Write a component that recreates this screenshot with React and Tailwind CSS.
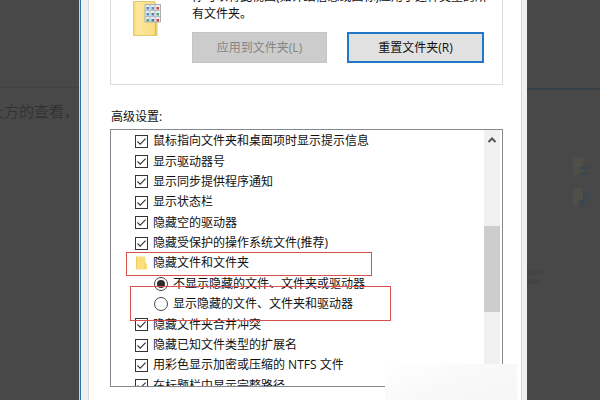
import React from "react";

const before = [
  "鼠标指向文件夹和桌面项时显示提示信息",
  "显示驱动器号",
  "显示同步提供程序通知",
  "显示状态栏",
  "隐藏空的驱动器",
  "隐藏受保护的操作系统文件(推荐)",
];
const after = [
  "隐藏文件夹合并冲突",
  "隐藏已知文件类型的扩展名",
  "用彩色显示加密或压缩的 NTFS 文件",
  "在标题栏中显示完整路径",
];

function CheckRow({ label }) {
  return (
    <label className="flex items-center gap-[5px] pl-6">
      <span className="grid h-[13px] w-[13px] shrink-0">
        <input
          type="checkbox"
          defaultChecked
          className="peer col-start-1 row-start-1 h-[13px] w-[13px] appearance-none border border-[#333] bg-white"
        />
        <svg viewBox="0 0 13 13" className="pointer-events-none invisible col-start-1 row-start-1 h-[13px] w-[13px] peer-checked:visible">
          <path d="M2.5 6.5 5.2 9.2 10.6 3.6" fill="none" stroke="#333" strokeWidth="1.1" />
        </svg>
      </span>
      {label}
    </label>
  );
}

function RadioRow({ label, checked }) {
  return (
    <label className="flex items-center gap-[5px] pl-[43px]">
      <span className="grid h-[14px] w-[14px] shrink-0 place-items-center">
        <input
          type="radio"
          name="hidden-files"
          defaultChecked={checked}
          className="peer col-start-1 row-start-1 h-[14px] w-[14px] appearance-none rounded-full border border-[#444] bg-white"
        />
        <span className="invisible col-start-1 row-start-1 h-2 w-2 rounded-full bg-[#2b2b2b] peer-checked:visible" />
      </span>
      {label}
    </label>
  );
}

function FolderViewIcon() {
  const dots = ["#4a90c8", "#4a90c8", "#cf4545", "#4a90c8", "#4a7ea8", "#55a07a", "#55a07a", "#3d78b5", "#cf4545"];
  return (
    <svg viewBox="0 0 28 38" className="h-[38px] w-7 shrink-0">
      <defs>
        <linearGradient id="folder" x1="0" y1="0" x2="1" y2="0">
          <stop offset="0" stopColor="#f3d56f" />
          <stop offset=".15" stopColor="#fde79b" />
          <stop offset="1" stopColor="#f8dc80" />
        </linearGradient>
      </defs>
      <path d="M.5 1.5H22l2 14V35.500H.5Z" fill="url(#folder)" stroke="#e3c76b" />
      <path d="M22.500 22v13" stroke="#d9b955" />
      <path d="M12 4.500h15.500V22H12Z" fill="#e9edf0" stroke="#a9b0b5" />
      <path d="M17 5v17M22 5v17M12 10.500h15M12 16.500h15" stroke="#b6bcc2" />
      {dots.map((c, i) => (
        <rect key={i} x={13.5 + (i % 3) * 5} y={7 + Math.floor(i / 3) * 6} width="2.500" height="2.500" fill={c} />
      ))}
    </svg>
  );
}

function DimFolder({ music }) {
  return (
    <svg viewBox="0 0 20 22" className="h-[22px] w-5">
      <path d="M1 1h10v17H1Z" fill="#504f47" />
      {music ? (
        <path d="M12 4v12M12 4q5 3 4 8" fill="none" stroke="#3a4650" strokeWidth="2" />
      ) : (
        <path d="M7 11h11M7 17h9" stroke="#3a4650" strokeWidth="2.500" />
      )}
      {music && <circle cx="9.500" cy="16" r="3" fill="#3a4650" />}
    </svg>
  );
}

export default function App() {
  return (
    <div className="flex h-screen overflow-hidden bg-[#484848] font-['Open_Sans','Noto_Sans_CJK_SC',sans-serif] text-[12px] leading-4 text-[#111]">
      <div className="flex w-20 shrink-0 flex-col overflow-hidden border-r border-[#c4d3de]">
        <div className="h-[88px] shrink-0 border-b border-[#424242]" />
        <div className="mt-3 flex justify-end text-[15px] leading-[22px] font-light whitespace-nowrap text-[#2c2c2c]">
          上方的查看，
        </div>
      </div>

      <main className="min-w-0 flex-1 border-l border-[#2a76b4] bg-[#f0f0f0] pr-[5px] pl-[7px]">
        <div className="h-full overflow-hidden border-x border-[#d9d9d9] bg-white pr-[18px] pl-[21px]">
          <section className="-mt-3 flex border border-t-0 border-[#dcdcdc] pr-[5px] pb-[21px] pl-[22px]">
            <div className="pt-3">
              <FolderViewIcon />
            </div>
            <div className="ml-[31px] min-w-0 flex-1">
              <p className="leading-[17px] whitespace-nowrap">
                你可以将此视图(如详细信息或图标)应用于这种类型的所
                <br />
                有文件夹。
              </p>
              <div className="mt-[10px] mr-[13px] flex gap-5">
                <button type="button" disabled className="h-[31px] flex-1 border border-[#c4c4c4] bg-[#ccc] text-[#858585]">
                  应用到文件夹(L)
                </button>
                <button type="button" className="h-[31px] flex-1 border-2 border-[#1f78c8] bg-[#e1e1e1]">
                  重置文件夹(R)
                </button>
              </div>
            </div>
          </section>

          <h2 className="mt-6 mb-1 pl-px">高级设置:</h2>

          <div className="relative h-[258px] border border-[#828790]">
            <div className="flex h-full overflow-hidden">
              <div className="grid h-[266px] min-w-0 flex-1 grid-rows-[repeat(13,minmax(0,1fr))] pt-px whitespace-nowrap">
                {before.map((t) => (
                  <CheckRow key={t} label={t} />
                ))}
                <div className="flex items-center gap-[5px] pl-6">
                  <svg viewBox="0 0 13 14" className="h-[14px] w-[13px] shrink-0">
                    <path d="M1 .5h9l1 7h1v6H1Z" fill="#fbdf7c" />
                    <path d="M10 8v5M1.500 1v12" stroke="#edcc62" />
                  </svg>
                  隐藏文件和文件夹
                </div>
                <RadioRow label="不显示隐藏的文件、文件夹或驱动器" checked />
                <RadioRow label="显示隐藏的文件、文件夹和驱动器" />
                {after.map((t) => (
                  <CheckRow key={t} label={t} />
                ))}
              </div>
              <div className="mr-[2px] flex w-4 flex-col bg-[#f0f0f0]">
                <svg viewBox="0 0 16 20" className="h-5 w-4">
                  <path d="m4.500 12 3.500-3.500 3.500 3.500" fill="none" stroke="#555" strokeWidth="2" />
                </svg>
                <div className="mt-[76px] h-[86px] bg-[#cdcdcd]" />
              </div>
            </div>
            <div className="pointer-events-none absolute top-[122px] left-[15px] h-6 w-[246px] border border-[#dc4f4f]" />
            <div className="pointer-events-none absolute top-[156px] left-[19px] h-[35px] w-[261px] border border-[#dc4f4f]" />
            <div className="pointer-events-none absolute top-[234px] -right-[15px] h-12 w-[132px] bg-linear-to-br from-white via-[#f8f8f8] to-[#f6f6f6]" />
          </div>
        </div>
      </main>

      <div className="flex w-[73px] shrink-0 flex-col overflow-hidden">
        <div className="h-[90px] shrink-0 border-b-2 border-[#354049]" />
        <div className="mt-[67px] flex flex-col items-end gap-2 pr-2">
          <DimFolder />
          <DimFolder music />
        </div>
        <div className="mt-[61px] h-[5px] w-4 bg-[#444]" />
        <div className="mt-1 h-[5px] w-3 bg-[#444]" />
      </div>
    </div>
  );
}
